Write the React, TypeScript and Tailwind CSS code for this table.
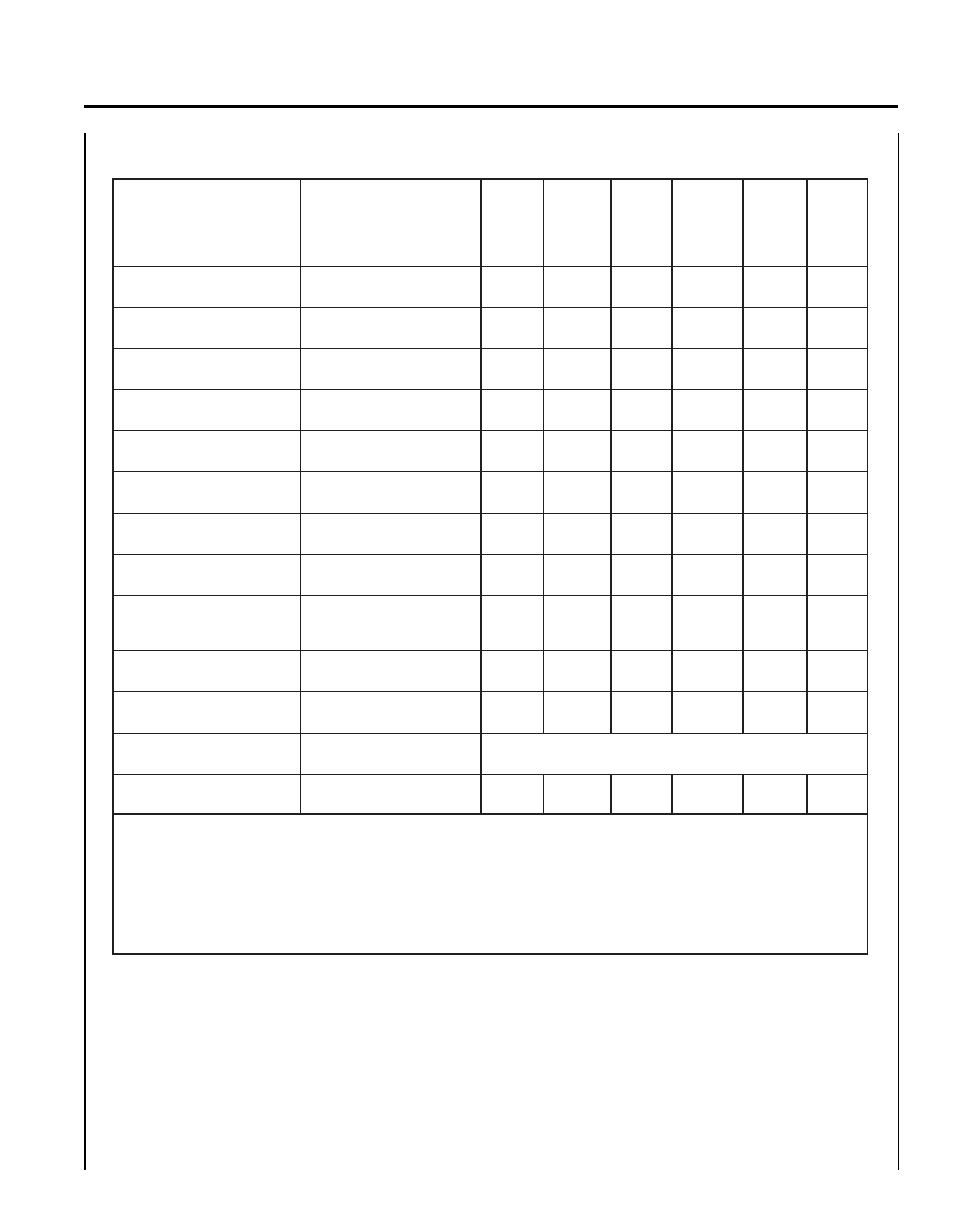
const colBorders = [
  "border-r",
  "border-r-2",
  "border-r",
  "border-r-2",
  "border-r-2",
  "border-r-2",
  "border-r-2",
  "border-r",
];

// heights of each body row, header first
const rowHeights = [
  "h-[87px]",
  "h-[41px]",
  "h-[41px]",
  "h-[41px]",
  "h-[41px]",
  "h-[41px]",
  "h-[42px]",
  "h-[41px]",
  "h-[41px]",
  "h-[55px]",
  "h-[41px]",
  "h-[42px]",
];

function FullRow({ height, bottom }: { height: string; bottom: string }) {
  return (
    <>
      {colBorders.map((b, i) => (
        <div key={i} className={`${height} ${b} ${bottom} border-[#231f20]`} />
      ))}
    </>
  );
}

export default function App() {
  return (
    <div className="w-[954px] h-[1221px] bg-white overflow-hidden">
      <div className="ml-[84px] pt-[105px]">
        <div className="w-[814px] h-[3px] bg-black" />
      </div>
      <div className="ml-[84px] mt-[25px] flex w-[815px] h-[1037px]">
        <div className="w-[2px] bg-black" />
        <div className="flex-1 pl-[26px] pt-[45px]">
          <div className="w-[756px] grid grid-cols-[187px_181px_62px_68px_61px_71px_64px_60px] border-l-2 border-t-2 border-[#231f20]">
            {rowHeights.map((h, r) => (
              <FullRow key={r} height={h} bottom="border-b" />
            ))}
            {/* merged row */}
            <div className="h-[41px] border-r border-b border-[#231f20]" />
            <div className="h-[41px] border-r-2 border-b border-[#231f20]" />
            <div className="col-span-6 h-[41px] border-r border-b border-[#231f20]" />
            <FullRow height="h-[40px]" bottom="border-b-2" />
            {/* notes */}
            <div className="col-span-8 h-[140px] border-r border-b-2 border-[#231f20]" />
          </div>
        </div>
        <div className="w-[1px] bg-black" />
      </div>
    </div>
  );
}
